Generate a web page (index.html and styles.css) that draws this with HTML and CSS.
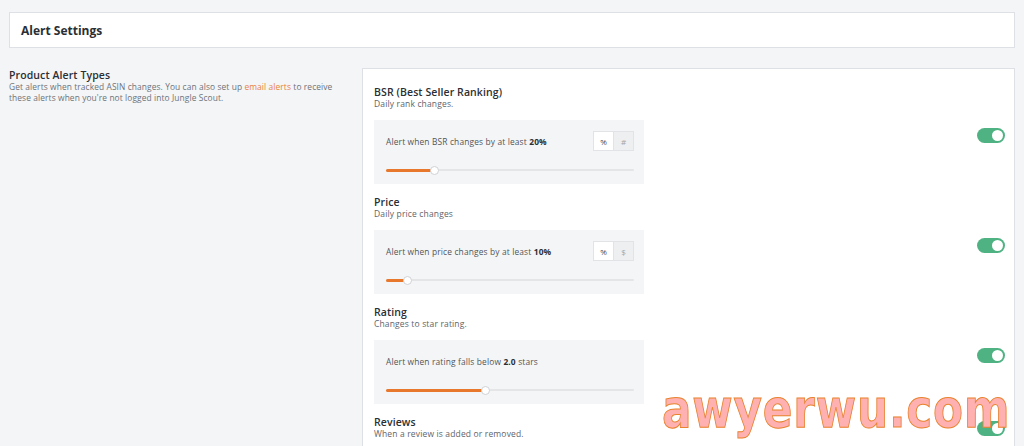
FILE: index.html
```html
<!DOCTYPE html>
<html>
<head>
<meta charset="utf-8">
<link rel="stylesheet" href="styles.css">
</head>
<body>
<div class="page">
  <div class="header">Alert Settings</div>
  <div class="section">
    <div class="intro">
      <div class="intro-title">Product Alert Types</div>
      <p class="intro-text">Get alerts when tracked ASIN changes. You can also set up <a class="link">email alerts</a> to receive these alerts when you're not logged into Jungle Scout.</p>
    </div>
    <div class="card">
      <div class="item">
        <div class="item-main">
          <div class="item-title">BSR (Best Seller Ranking)</div>
          <div class="item-sub">Daily rank changes.</div>
          <div class="box">
            <div class="box-row">
              <span class="box-text">Alert when BSR changes by at least <b>20%</b></span>
              <div class="seg"><span class="seg-btn on">%</span><span class="seg-btn">#</span></div>
            </div>
            <div class="slider"><div class="fill" style="width:48px"></div><div class="thumb"></div></div>
          </div>
        </div>
        <div class="toggle"><span class="knob"></span></div>
      </div>
      <div class="item">
        <div class="item-main">
          <div class="item-title">Price</div>
          <div class="item-sub">Daily price changes</div>
          <div class="box">
            <div class="box-row">
              <span class="box-text">Alert when price changes by at least <b>10%</b></span>
              <div class="seg"><span class="seg-btn on">%</span><span class="seg-btn">$</span></div>
            </div>
            <div class="slider"><div class="fill" style="width:21px"></div><div class="thumb"></div></div>
          </div>
        </div>
        <div class="toggle"><span class="knob"></span></div>
      </div>
      <div class="item">
        <div class="item-main">
          <div class="item-title">Rating</div>
          <div class="item-sub">Changes to star rating.</div>
          <div class="box">
            <div class="box-row">
              <span class="box-text">Alert when rating falls below <b>2.0</b> stars</span>
            </div>
            <div class="slider"><div class="fill" style="width:99px"></div><div class="thumb"></div></div>
          </div>
        </div>
        <div class="toggle"><span class="knob"></span></div>
      </div>
      <div class="item last">
        <div class="item-main">
          <div class="item-title">Reviews</div>
          <div class="item-sub">When a review is added or removed.</div>
        </div>
        <div class="toggle"><span class="knob"></span></div>
      </div>
    </div>
  </div>
</div>
<div class="watermark">awyerwu.com</div>
</body>
</html>
```
FILE: styles.css
```css
html, body { margin: 0; padding: 0; }
body {
  background: #f4f5f7;
  font-family: "Open Sans", "Noto Sans", sans-serif;
  color: #2f3337;
  width: 1024px;
  height: 446px;
  overflow: hidden;
  position: relative;
}
.page { padding: 12px 9px 0 9px; height: 434px; overflow: hidden; }
.header {
  background: #fff;
  border: 1px solid #dde1e6;
  height: 34px;
  display: flex;
  align-items: center;
  padding-left: 11px;
  font-size: 12px;
  font-weight: 700;
  color: #2b2f33;
}
.section { display: flex; margin-top: 20px; }
.intro { width: 353px; flex: none; padding-top: 1px; }
.intro-title { font-size: 10.5px; font-weight: 600; line-height: 12px; color: #2b2f33; letter-spacing: 0.1px; }
.intro-text { margin: 0; font-size: 8.4px; line-height: 11px; color: #6e7378; width: 338px; letter-spacing: 0.1px; }
.link { color: #e8833a; }
.card {
  flex: 1;
  background: #fff;
  border: 1px solid #dde1e6;
  padding: 17px 9px 0 11px;
  height: 400px;
}
.item { display: flex; align-items: flex-start; height: 110px; }
.item-main { width: 270px; }
.item-title { font-size: 10.5px; font-weight: 600; line-height: 12px; color: #2b2f33; letter-spacing: 0.1px; }
.item-sub { font-size: 8.5px; line-height: 12px; color: #5f6469; letter-spacing: 0.15px; }
.box {
  margin-top: 10px;
  background: #f4f5f7;
  height: 64px;
  box-sizing: border-box;
  padding: 11px 10px 0 12px;
}
.box-row { display: flex; justify-content: space-between; align-items: center; height: 20px; }
.box-text { font-size: 8.4px; color: #50555a; letter-spacing: 0.15px; }
.box-text b { color: #2b2f33; font-weight: 700; }
.seg { display: flex; border: 1px solid #e1e3e6; height: 18px; }
.seg-btn { width: 19px; display: flex; align-items: center; justify-content: center; font-size: 8px; color: #a0a4a8; background: #eeeff1; }
.seg-btn.on { background: #fff; color: #44484c; border-right: 1px solid #e1e3e6; }
.slider { position: relative; margin-top: 18px; height: 2px; background: #e4e5e7; border-radius: 1px; display: flex; align-items: center; }
.fill { height: 3px; background: #e8792c; border-radius: 2px; }
.thumb { width: 9px; height: 9px; border-radius: 50%; background: #fff; border: 1px solid #cfd2d5; margin-left: -4px; box-sizing: border-box; }
.toggle {
  margin-left: auto;
  margin-top: 42px;
  width: 28px;
  height: 15px;
  border-radius: 8px;
  background: #4fb283;
  display: flex;
  align-items: center;
  justify-content: flex-end;
  padding-right: 2px;
  box-sizing: border-box;
}
.knob { width: 11px; height: 11px; border-radius: 50%; background: #fff; }
.item.last .toggle { margin-top: 5px; }
.watermark {
  position: absolute;
  left: 662px;
  top: 382px;
  font-family: "DejaVu Sans", sans-serif;
  font-size: 54px;
  font-weight: 700;
  color: #ffb1b1;
  -webkit-text-stroke: 1px #e8832e;
  transform-origin: left top;
  transform: scaleX(0.81);
  letter-spacing: 1px;
  line-height: 1;
}
```
